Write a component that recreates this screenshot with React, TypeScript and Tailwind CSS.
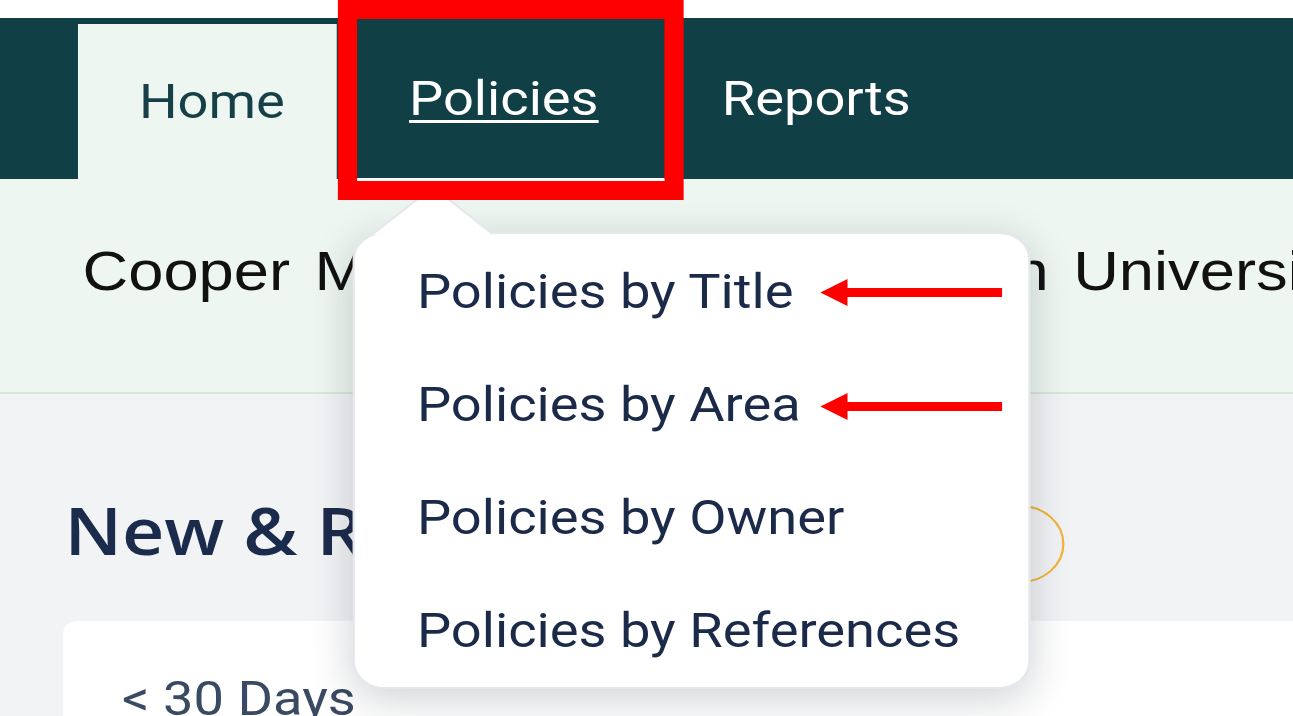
const menuItems = [
  'Policies by Title',
  'Policies by Area',
  'Policies by Owner',
  'Policies by References',
];

function RedArrow({ top }: { top: number }) {
  return (
    <svg
      className="absolute left-[726px] z-20"
      style={{ top }}
      width="161"
      height="27"
      viewBox="0 0 161 27"
    >
      <polygon points="0,13.5 24,0 24,27" fill="#ff0000" />
      <rect x="22" y="9" width="139" height="9" fill="#ff0000" />
    </svg>
  );
}

export default function App() {
  return (
    <div className="h-[716px] w-[1293px] overflow-hidden bg-white">
      {/* the screenshot is stretched horizontally, so the page is drawn narrow and scaled */}
      <div className="relative h-[716px] w-[1145px] origin-top-left scale-x-[1.13] bg-[#f2f3f5]">
        <div className="h-[18px] bg-white" />

        <nav className="flex h-[161px] items-end bg-[#113f46] pl-[69px] font-['Roboto',sans-serif] text-[48px]">
          <a className="flex h-[155px] w-[229px] items-center justify-center bg-[#edf6f1] pl-[8px] text-[#163f47]">
            Home
          </a>
          <a className="flex h-full items-center pl-[64px] pr-[45px] text-white">
            <span className="underline decoration-[3px] underline-offset-[5px]">
              Policies
            </span>
          </a>
          <a className="flex h-full items-center pl-[64px] text-white">Reports</a>
        </nav>

        <div className="h-[215px] border-b-2 border-[#d7e8da] bg-[#edf6f0] pl-[73px] pt-[64px]">
          <h1 className="whitespace-nowrap font-['Liberation_Sans',Arial,sans-serif] text-[56px] leading-none text-[#111111] [word-spacing:6px]">
            Cooper Medical School of Rowan University
          </h1>
        </div>

        <section className="pt-[104px]">
          <div className="flex h-[66px] items-start pl-[57px]">
            <h2 className="w-[795px] shrink-0 whitespace-nowrap font-['Open_Sans',sans-serif] text-[65px] font-semibold leading-none text-[#1b2b4b]">
              New &amp; Revised Policies
            </h2>
            <div className="ml-[12px] mt-[7px] h-[78px] w-[78px] shrink-0 rounded-full border-2 border-[#f2b43a]" />
          </div>

          <div className="ml-[56px] mt-[57px] h-[200px] rounded-tl-[12px] bg-white pl-[52px] pt-[54px]">
            <p className="font-['Roboto',sans-serif] text-[48px] leading-none text-[#3a4a62]">
              &lt; 30 Days
            </p>
          </div>
        </section>

        {/* dropdown menu */}
        <div className="absolute left-[312px] top-[232px] z-10 h-[457px] w-[600px] rounded-[28px] border-2 border-[#e4e7eb] bg-white py-[1px] pl-[55px] font-['Roboto',sans-serif] text-[48px] text-[#1b2a48] shadow-[0_10px_40px_rgba(15,23,42,0.2)]">
          <svg
            className="absolute left-[16px] top-[-48px]"
            width="106"
            height="50"
            viewBox="0 0 106 50"
          >
            <polygon points="0,49 53,1 106,49" fill="#ffffff" />
            <polyline
              points="0,48 53,1 106,48"
              fill="none"
              stroke="#e4e7eb"
              strokeWidth="2"
            />
          </svg>
          {menuItems.map((item) => (
            <div key={item} className="flex h-[113px] items-center whitespace-nowrap">
              {item}
            </div>
          ))}
        </div>

        {/* annotation */}
        <div className="absolute left-[299px] top-0 z-20 h-[200px] w-[306px] border-x-[17px] border-y-[19px] border-[#ff0000]">
          <div className="absolute bottom-0 left-0 right-0 h-[3px] bg-white" />
        </div>
        <RedArrow top={279} />
        <RedArrow top={393} />
      </div>
    </div>
  );
}
